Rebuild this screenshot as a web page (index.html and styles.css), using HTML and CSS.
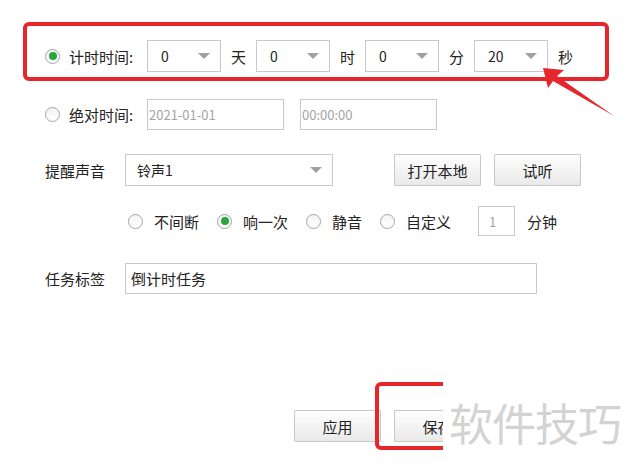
FILE: index.html
```html
<!DOCTYPE html>
<html lang="zh">
<head>
<meta charset="utf-8">
<title>倒计时设置</title>
<link rel="stylesheet" href="styles.css">
</head>
<body>
<div class="page">
  <div class="form">
    <div class="row row-timer">
      <span class="radio checked"></span>
      <span class="label">计时时间:</span>
      <div class="combo"><span class="val">0</span><span class="caret"></span></div>
      <span class="unit">天</span>
      <div class="combo"><span class="val">0</span><span class="caret"></span></div>
      <span class="unit">时</span>
      <div class="combo"><span class="val">0</span><span class="caret"></span></div>
      <span class="unit">分</span>
      <div class="combo"><span class="val">20</span><span class="caret"></span></div>
      <span class="unit">秒</span>
    </div>
    <div class="row row-abs">
      <span class="radio"></span>
      <span class="label">绝对时间:</span>
      <div class="field dim">2021-01-01</div>
      <div class="field dim">00:00:00</div>
    </div>
    <div class="row row-sound">
      <span class="label wide">提醒声音</span>
      <div class="combo big"><span class="val">铃声1</span><span class="caret"></span></div>
      <button class="btn open">打开本地</button>
      <button class="btn">试听</button>
    </div>
    <div class="row row-mode">
      <span class="opt"><span class="radio"></span>不间断</span>
      <span class="opt"><span class="radio checked"></span>响一次</span>
      <span class="opt"><span class="radio"></span>静音</span>
      <span class="opt"><span class="radio"></span>自定义</span>
      <div class="field small dim">1</div>
      <span class="unit-min">分钟</span>
    </div>
    <div class="row row-tag">
      <span class="label wide">任务标签</span>
      <div class="field long">倒计时任务</div>
    </div>
    <div class="row row-actions">
      <button class="btn">应用</button>
      <button class="btn">保存</button>
    </div>
  </div>

  <div class="mark mark-top"></div>
  <svg class="arrow" width="80" height="60" viewBox="540 64 80 60">
    <polygon points="543,68 564,70 557,76 614,116 553,81 548,88" fill="#e5262a"/>
  </svg>
  <div class="mark mark-bottom"></div>
  <div class="watermark">软件技巧</div>
</div>
</body>
</html>
```

FILE: styles.css
```css
html, body {
  margin: 0;
  padding: 0;
  background: #ffffff;
}
body {
  font-family: "Noto Sans CJK SC", "Microsoft YaHei", sans-serif;
  font-size: 15px;
  color: #222222;
}
.page {
  position: relative;
  width: 632px;
  height: 469px;
  overflow: hidden;
}
.form {
  display: flex;
  flex-direction: column;
  padding: 40px 0 0 45px;
}
.row {
  display: flex;
  align-items: center;
}
.row-timer { height: 32px; gap: 10px; }
.row-abs { height: 31px; margin-top: 27px; }
.row-sound { height: 32px; margin-top: 24px; }
.row-mode { height: 30px; margin-top: 20px; padding-left: 83px; }
.row-tag { height: 31px; margin-top: 27px; }
.row-actions { height: 32px; margin-top: 116px; padding-left: 249px; gap: 13px; }

.radio {
  box-sizing: border-box;
  width: 15px;
  height: 15px;
  border: 1px solid #a4a4a4;
  border-radius: 50%;
  background: linear-gradient(#f4f4f4, #ffffff);
  display: flex;
  align-items: center;
  justify-content: center;
  flex: none;
}
.radio.checked::after {
  content: "";
  width: 8px;
  height: 8px;
  border-radius: 50%;
  background: #2aa63a;
}
.label {
  width: 78px;
  flex: none;
}
.row-timer .label { width: 68px; margin-left: -1px; }
.row-abs .label { margin-left: 9px; }
.label.wide { width: 80px; }

.combo {
  box-sizing: border-box;
  width: 74px;
  height: 32px;
  border: 1px solid #c9c9c9;
  background: #ffffff;
  display: flex;
  align-items: center;
  justify-content: space-between;
  padding: 0 10px 0 13px;
  flex: none;
  font-size: 14px;
}
.combo.big {
  width: 208px;
  padding-left: 11px;
}
.caret {
  width: 0;
  height: 0;
  border-left: 6px solid transparent;
  border-right: 6px solid transparent;
  border-top: 6px solid #a0a0a0;
}
.unit { width: 15px; }

.field {
  box-sizing: border-box;
  height: 31px;
  width: 137px;
  border: 1px solid #c9c9c9;
  background: #ffffff;
  display: flex;
  align-items: center;
  padding-left: 1px;
  flex: none;
}
.row-abs .field + .field { margin-left: 16px; }
.field.dim {
  color: #a3a3a3;
  font-size: 13px;
}
.field.small {
  width: 37px;
  height: 30px;
  padding-left: 10px;
  margin-left: 27px;
}
.field.long {
  width: 412px;
  padding-left: 5px;
  color: #222222;
}

.opt {
  display: flex;
  align-items: center;
  gap: 11px;
  margin-right: 18px;
}
.opt:nth-child(4) { margin-right: 0; }
.unit-min { margin-left: 12px; }

.btn {
  box-sizing: border-box;
  width: 87px;
  height: 32px;
  border: 1px solid #c8c8c8;
  border-radius: 1px;
  background: linear-gradient(#fefefe, #e9e9e9);
  font-family: inherit;
  font-size: 15px;
  color: #222222;
  padding: 0;
}
.btn.open { margin-left: 61px; margin-right: 13px; }

.mark {
  position: absolute;
  box-sizing: border-box;
  border: 4px solid #e5262a;
  border-radius: 6px;
}
.mark-top {
  left: 23px;
  top: 22px;
  width: 586px;
  height: 59px;
}
.mark-bottom {
  left: 375px;
  top: 382px;
  width: 120px;
  height: 68px;
}
.arrow {
  position: absolute;
  left: 540px;
  top: 64px;
}
.watermark {
  position: absolute;
  left: 443px;
  top: 372px;
  width: 189px;
  height: 97px;
  background: #ffffff;
  color: #d3d3d3;
  font-size: 44px;
  line-height: 44px;
  padding: 28px 0 0 6px;
  box-sizing: border-box;
  letter-spacing: -1px;
}
```
